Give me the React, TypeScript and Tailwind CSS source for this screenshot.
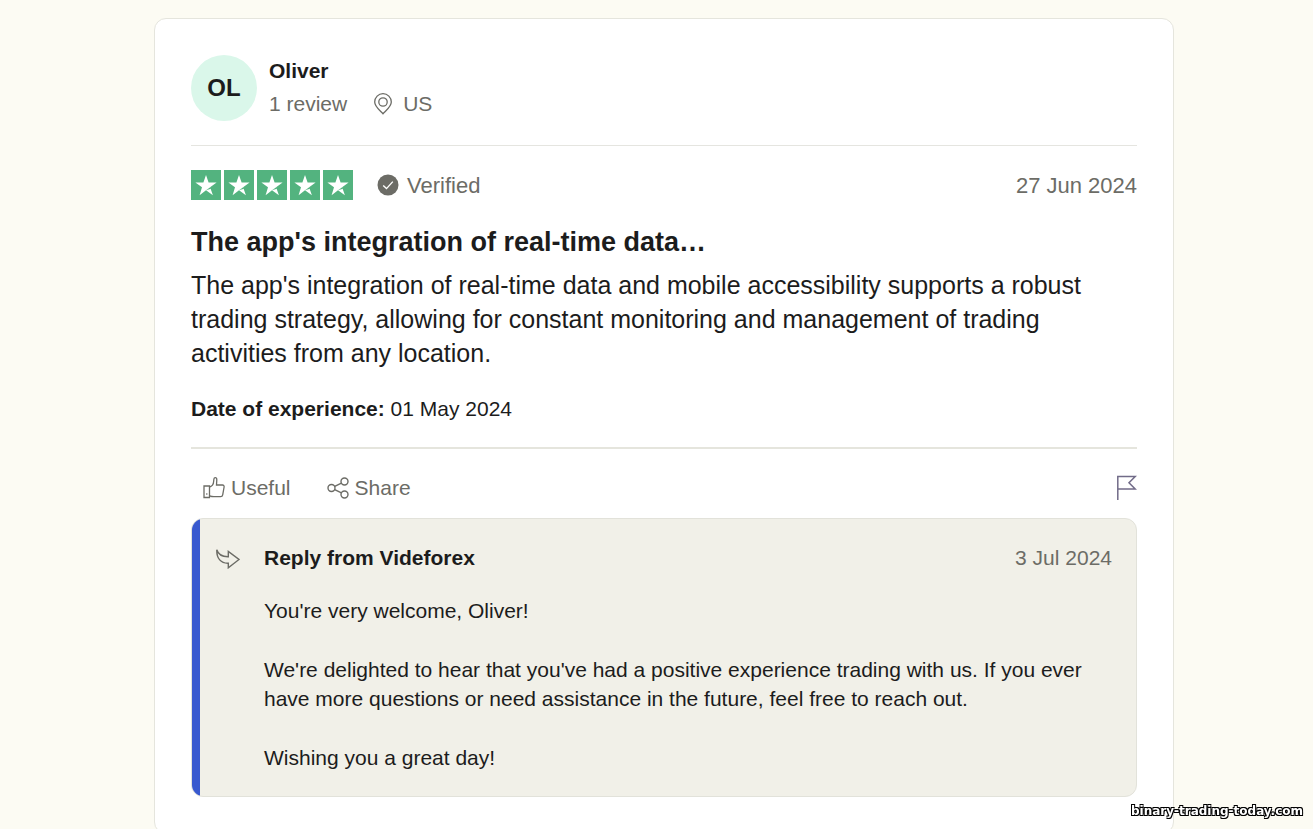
import type { ReactNode } from 'react';

const stars = [1, 2, 3, 4, 5];

function StarTile() {
    return (
        <svg viewBox="0 0 30 30" className="size-[30px]">
            <rect width="30" height="30" fill="#53b37f" />
            <path
                d="M15 5l2.600 7.600h8l-6.500 4.600 2.800 8-6.900-4.900-6.400 4.900 2.400-7.900-6.600-4.700h8z"
                fill="#fff"
            />
            <path d="M15 20.300l5-1.500-.8-1.600z" fill="#53b37f" />
        </svg>
    );
}

function PinIcon() {
    return (
        <svg viewBox="0 0 20 22" className="h-[22px] w-5" fill="none" stroke="#6c6c66" strokeWidth="1.3">
            <path d="M10 20.700C7.200 17.600 1.700 13.800 1.700 9a8.300 8.300 0 0 1 16.600 0c0 4.800-5.500 8.600-8.300 11.700z" />
            <circle cx="10" cy="9" r="4.200" />
        </svg>
    );
}

function ThumbIcon() {
    return (
        <svg viewBox="0 0 22 22" className="size-[22px]" fill="none" stroke="#6c6c66" strokeWidth="1.3">
            <path d="M1 9h5.500v11.500H1z" />
            <path d="M6.500 10c2.500-.5 4-2.500 4.200-6l.2-2c.1-.9.7-1.300 1.400-1.300 1 0 1.500.9 1.500 2.100L13.500 8h6c1.200 0 1.800.9 1.600 2l-1.400 7.800c-.2 1.100-.9 1.800-2 1.800H11c-1.800 0-2.800-.2-4.500-.8" />
            <path d="M3.200 17h1.200" />
        </svg>
    );
}

function ShareIcon() {
    return (
        <svg viewBox="0 0 22 22" className="size-[22px]" fill="none" stroke="#6c6c66" strokeWidth="1.4">
            <circle cx="4.500" cy="11" r="3.500" />
            <circle cx="17.500" cy="4.500" r="3.500" />
            <circle cx="17.500" cy="17.500" r="3.500" />
            <path d="M7.700 9.400l6.700-3.300M7.700 12.600l6.700 3.300" />
        </svg>
    );
}

function FlagIcon() {
    return (
        <svg viewBox="0 0 20 25" className="h-[25px] w-5" fill="none" stroke="#716b88" strokeWidth="1.500">
            <path d="M.8 25V1.500h17.400L12 7.700l6.200 6.200H.8" />
        </svg>
    );
}

function ReplyIcon() {
    return (
        <svg viewBox="0 0 24 20" className="h-5 w-6" fill="none" stroke="#6c6c66" strokeWidth="1.4">
            <path d="M.8.8c1.500 5 5 7 11.500 6.900V2.500L23 10.500l-10.700 8.300v-4.600C5 14.500.5 9.500.8.8z" />
        </svg>
    );
}

function Verified() {
    return (
        <div className="flex items-center gap-2 text-[22px] text-[#6c6c66]">
            <svg viewBox="0 0 22 22" className="size-[22px]">
                <circle cx="11" cy="11" r="10.500" fill="#6c6c66" />
                <path d="M6.200 11.400l3.300 3.200 6.300-7" fill="none" stroke="#fff" strokeWidth="1.400" />
            </svg>
            <span>Verified</span>
        </div>
    );
}

function ActionButton({ icon, label }: { icon: ReactNode; label: string }) {
    return (
        <button type="button" className="flex items-center gap-1.5 text-[#6c6c66]">
            {icon}
            {label}
        </button>
    );
}

export default function App() {
    return (
        <main className="min-h-screen bg-[#fcfbf3] pt-[18px] pr-[139px] pl-[154px] font-['Liberation_Sans',Arial,sans-serif] text-[21px] leading-[29px] text-[#1c1c1c]">
            <article className="rounded-xl border border-[#e5e5dd] bg-white p-9">
                <header className="flex items-center gap-3 border-b border-[#e5e5e0] pb-6">
                    <div className="flex size-[66px] items-center justify-center rounded-full bg-[#daf7ea] text-2xl font-bold">
                        OL
                    </div>
                    <div className="pb-0.5">
                        <div className="font-bold">Oliver</div>
                        <div className="mt-1 flex items-center gap-[26px] text-[#6c6c66]">
                            <span>1 review</span>
                            <span className="flex items-center gap-2.5">
                                <PinIcon />
                                US
                            </span>
                        </div>
                    </div>
                </header>

                <section className="border-b-2 border-[#e5e5dd] pt-6 pb-6">
                    <div className="flex items-center justify-between">
                        <div className="flex items-center gap-6">
                            <div className="flex gap-[3px]" role="img" aria-label="Rated 5 out of 5 stars">
                                {stars.map((n) => (
                                    <StarTile key={n} />
                                ))}
                            </div>
                            <Verified />
                        </div>
                        <time className="text-[22px] text-[#6c6c66]">27 Jun 2024</time>
                    </div>
                    <h2 className="mt-6 text-[27px] leading-9 font-bold">The app's integration of real-time data…</h2>
                    <p className="mt-2 text-[25px] leading-[34px]">
                        The app's integration of real-time data and mobile accessibility supports a robust trading
                        strategy, allowing for constant monitoring and management of trading activities from any
                        location.
                    </p>
                    <p className="mt-6">
                        <b>Date of experience:</b> 01 May 2024
                    </p>
                </section>

                <div className="flex items-center justify-between pt-6 pb-4 pl-3">
                    <div className="flex gap-9">
                        <ActionButton icon={<ThumbIcon />} label="Useful" />
                        <ActionButton icon={<ShareIcon />} label="Share" />
                    </div>
                    <button type="button" aria-label="Flag review">
                        <FlagIcon />
                    </button>
                </div>

                <section className="flex overflow-hidden rounded-xl border border-[#e2e2da] bg-[#f1f0e8]">
                    <div className="w-2 shrink-0 bg-[#3859cf]" />
                    <div className="flex flex-1 gap-6 py-6 pr-6 pl-4">
                        <div className="pt-1.5">
                            <ReplyIcon />
                        </div>
                        <div className="flex-1">
                            <div className="flex justify-between">
                                <h3 className="font-bold">Reply from Videforex</h3>
                                <time className="text-[#6c6c66]">3 Jul 2024</time>
                            </div>
                            <p className="mt-6">You're very welcome, Oliver!</p>
                            <p className="mt-[30px]">
                                We're delighted to hear that you've had a positive experience trading with us. If you
                                ever have more questions or need assistance in the future, feel free to reach out.
                            </p>
                            <p className="mt-[30px]">Wishing you a great day!</p>
                        </div>
                    </div>
                </section>
            </article>
            <div className="fixed right-[10px] bottom-[10px] font-['DejaVu_Sans',sans-serif] text-[12px] leading-4 font-bold text-white [text-shadow:-1px_-1px_0_#000,1px_-1px_0_#000,-1px_1px_0_#000,1px_1px_0_#000,0_-1px_0_#000,0_1px_0_#000]">
                binary-trading-today.com
            </div>
        </main>
    );
}
